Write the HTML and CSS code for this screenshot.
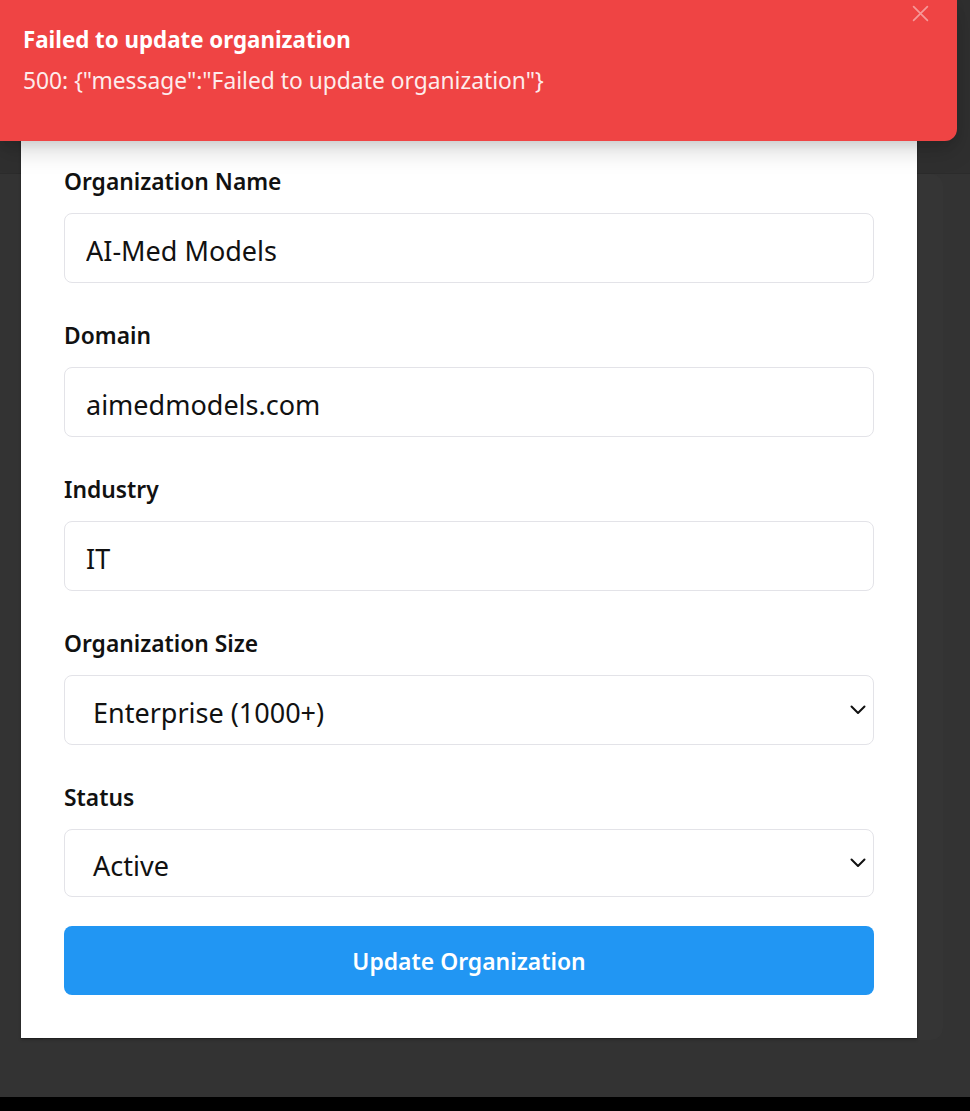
FILE: index.html
```html
<!DOCTYPE html>
<html>
<head>
<meta charset="utf-8">
<link rel="stylesheet" href="styles.css">
</head>
<body>
<div class="page">
  <div class="page-header"></div>
  <div class="page-body">
    <div class="page-card"></div>
  </div>
</div>
<div class="bottom-bar"></div>

<div class="modal">
  <form class="form">
    <div class="field">
      <label class="label">Organization Name</label>
      <input class="input" type="text" value="AI-Med Models">
    </div>
    <div class="field">
      <label class="label">Domain</label>
      <input class="input" type="text" value="aimedmodels.com">
    </div>
    <div class="field">
      <label class="label">Industry</label>
      <input class="input" type="text" value="IT">
    </div>
    <div class="field">
      <label class="label">Organization Size</label>
      <div class="select">
        <span class="select-value">Enterprise (1000+)</span>
        <svg class="chevron" viewBox="0 0 16 10" width="16" height="10"><path d="M1.5 1.5l6.5 6.5 6.5-6.5" fill="none" stroke="#111" stroke-width="2" stroke-linecap="round" stroke-linejoin="round"/></svg>
      </div>
    </div>
    <div class="field">
      <label class="label">Status</label>
      <div class="select">
        <span class="select-value">Active</span>
        <svg class="chevron" viewBox="0 0 16 10" width="16" height="10"><path d="M1.5 1.5l6.5 6.5 6.5-6.5" fill="none" stroke="#111" stroke-width="2" stroke-linecap="round" stroke-linejoin="round"/></svg>
      </div>
    </div>
    <button class="submit" type="button">Update Organization</button>
  </form>
</div>

<div class="toast">
  <div class="toast-title">Failed to update organization</div>
  <div class="toast-msg">500: {"message":"Failed to update organization"}</div>
  <svg class="toast-close" viewBox="0 0 16 16" width="17" height="17"><path d="M1.5 1.5l13 13M14.5 1.5l-13 13" stroke="currentColor" stroke-width="1.6" stroke-linecap="round"/></svg>
</div>
</body>
</html>
```
FILE: styles.css
```css
* { box-sizing: border-box; }
html, body { margin: 0; padding: 0; }
body {
  width: 970px;
  height: 1111px;
  background: #333333;
  font-family: "Noto Sans", "Open Sans", sans-serif;
  overflow: hidden;
  position: relative;
}
.page {
  height: 1097px;
  display: flex;
  flex-direction: column;
}
.page-header {
  height: 174px;
  background: #2f2f2f;
  border-bottom: 1px solid #2b2b2b;
}
.page-body {
  flex: 1;
  padding: 0 27px 57px 0;
  display: flex;
  justify-content: flex-end;
}
.page-card {
  width: 900px;
  background: #353535;
  border-radius: 0 12px 12px 0;
}
.bottom-bar {
  height: 14px;
  background: #000;
}
.modal {
  position: absolute;
  left: 21px;
  top: 100px;
  width: 896px;
  height: 938px;
  background: #fff;
  box-shadow: 0 1px 1px rgba(0,0,0,0.25), 0 2px 3px rgba(0,0,0,0.2);
  padding: 66px 43px 43px;
}
.form {
  display: flex;
  flex-direction: column;
}
.field {
  display: flex;
  flex-direction: column;
}
.field + .field { margin-top: 37px; }
.label {
  font-size: 22.8px;
  font-weight: 600;
  color: #111;
  line-height: 31px;
  margin-bottom: 16px;
}
.input, .select {
  height: 70px;
  width: 100%;
  border: 1px solid #e3e3e8;
  border-radius: 8px;
  padding: 4px 21px 0;
  font-family: inherit;
  font-size: 27px;
  color: #111;
  background: #fff;
  outline: none;
}
.select {
  display: flex;
  align-items: center;
  justify-content: space-between;
  padding: 0 7px 0 28px;
}
.select-value { line-height: 1; padding-top: 4px; }
.field:last-of-type .select { height: 68px; }
.chevron { display: block; }
.submit {
  margin-top: 29px;
  height: 69px;
  border: none;
  border-radius: 8px;
  background: #2196f3;
  color: #fff;
  font-family: inherit;
  font-size: 22.9px;
  font-weight: 600;
  padding-top: 2px;
}
.toast {
  position: absolute;
  left: 0;
  top: 0;
  width: 957px;
  height: 141px;
  background: #ef4444;
  border-radius: 0 0 12px 0;
  padding: 25px 23px;
  color: #fff;
  box-shadow: 0 10px 25px rgba(0,0,0,0.15), 0 4px 10px rgba(0,0,0,0.08);
}
.toast-title {
  font-size: 22.3px;
  font-weight: 700;
  line-height: 30px;
}
.toast-msg {
  font-size: 22.8px;
  line-height: 30px;
  margin-top: 11px;
  opacity: 0.9;
}
.toast-close {
  position: absolute;
  right: 28px;
  top: 5px;
  color: rgba(255,255,255,0.45);
}
```
